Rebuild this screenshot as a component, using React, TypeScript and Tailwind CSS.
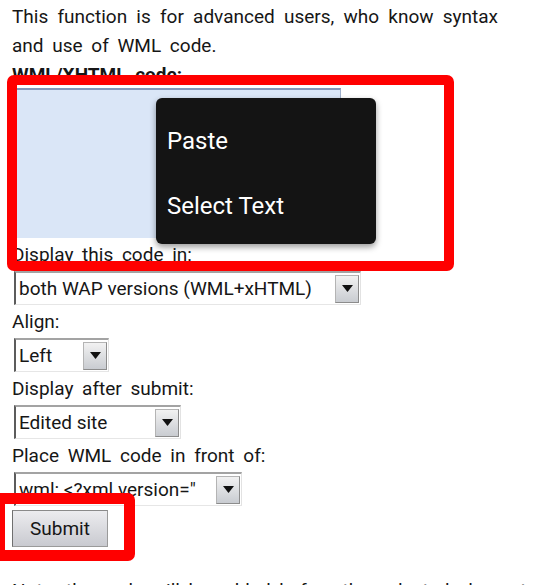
import React from 'react';

interface SelectBoxProps {
  value: string;
  width: string;
}

function SelectBox({ value, width }: SelectBoxProps) {
  return (
    <div
      className={`ml-[2px] flex h-[34px] ${width} items-center border-t-2 border-l-2 border-r border-b border-t-[#a3a3a3] border-l-[#5c5c5c] border-r-[#e2e2e2] border-b-[#e6e6e6] bg-white pl-[3px] pr-px [word-spacing:normal]`}
    >
      <span className="flex-1 overflow-hidden whitespace-nowrap leading-[30px]">{value}</span>
      <div className="flex h-[28px] w-[24px] shrink-0 items-center justify-center border border-[#b4b4b4] border-r-[#8c8c8c] border-b-[#8c8c8c] bg-gradient-to-b from-[#f2f2f2] to-[#c9ccd1]">
        <svg width="11" height="7" viewBox="0 0 11 7">
          <path d="M0 0h11L5.5 7z" fill="#111" />
        </svg>
      </div>
    </div>
  );
}

function Label({ children }: { children: React.ReactNode }) {
  return <div className="h-[33px] leading-[33px]">{children}</div>;
}

export default function App() {
  return (
    <div className="relative h-[585px] w-[540px] overflow-hidden bg-white font-['Roboto',sans-serif] text-[19px] text-[#161616] [word-spacing:4px]">
      <div className="pl-3 pr-[42px]">
        <p className="pt-[2px] text-justify leading-[29px]">
          This function is for advanced users, who know syntax and use of WML code.
        </p>
        <div className="pt-px font-bold leading-[27px]">WML/XHTML code:</div>
        <div className="h-[150px] w-[329px] border-t-2 border-l-2 border-r border-[#8397b9] border-r-[#9fb0cc] bg-[#dae6f7]" />
        <Label>Display this code in:</Label>
        <SelectBox value="both WAP versions (WML+xHTML)" width="w-[347px]" />
        <Label>Align:</Label>
        <SelectBox value="Left" width="w-[95px]" />
        <Label>Display after submit:</Label>
        <SelectBox value="Edited site" width="w-[167px]" />
        <Label>Place WML code in front of:</Label>
        <SelectBox value={'wml: <?xml version="'} width="w-[228px]" />
        <button className="mt-[4px] h-[37px] w-[96px] border border-[#9a9a9a] border-l-[#6f6f6f] border-t-[#8a8a8a] bg-gradient-to-b from-[#ececef] to-[#c9cad0] text-[19px] leading-[35px] text-[#161616] [word-spacing:normal]">
          Submit
        </button>
        <p className="mt-[29px] leading-[29px] whitespace-nowrap">
          Note: the code will be added before the selected element.
        </p>
      </div>

      {/* context menu */}
      <div className="absolute left-[156px] top-[98px] h-[146px] w-[220px] rounded-[6px] bg-[#141414] pt-[10px] pl-[11px] text-[24px] text-white shadow-[0_3px_6px_rgba(0,0,0,0.4)] [word-spacing:normal]">
        <div className="h-[65px] leading-[66px]">Paste</div>
        <div className="h-[65px] leading-[66px]">Select Text</div>
      </div>

      {/* annotation boxes */}
      <div className="absolute left-[7px] top-[75px] h-[196px] w-[447px] rounded-[7px] border-[10px] border-[#ff0000]" />
      <div className="absolute left-[-6px] top-[493px] h-[68px] w-[141px] rounded-[7px] border-[11px] border-[#ff0000]" />
    </div>
  );
}
